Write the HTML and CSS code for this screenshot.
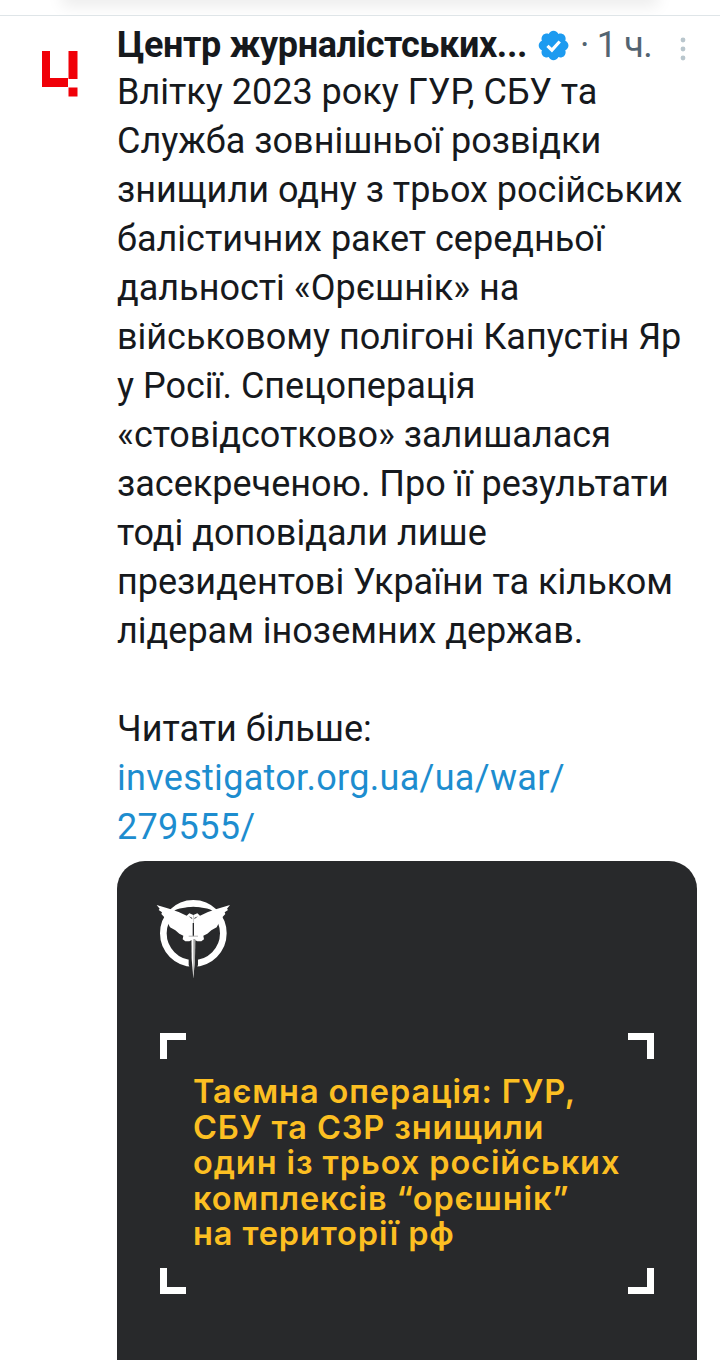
FILE: index.html
```html
<!DOCTYPE html>
<html lang="uk">
<head>
<meta charset="utf-8">
<title>Tweet</title>
<link rel="stylesheet" href="styles.css">
</head>
<body>
<div class="topbar"></div>
<article class="tweet">
  <div class="avatar">
    <svg class="avatar-logo" viewBox="0 0 36 46" width="36" height="46"><path fill="#f00008" d="M0 0h8v27h18v9H0zM26.500 0h9v28h-9zM26.500 36.500h9v9h-9z"/></svg>
  </div>
  <div class="main">
    <header class="head">
      <span class="name">Центр журналістських...</span>
      <svg class="badge" viewBox="0 0 22 22" width="35" height="35"><path fill="#1d9bf0" d="M20.400 11c0-1.300-.8-2.500-2-3 .5-1.200.2-2.600-.7-3.600-1-.9-2.400-1.200-3.600-.7-.5-1.200-1.700-2-3.100-2s-2.500.8-3 2c-1.200-.5-2.600-.2-3.600.7-.9 1-1.200 2.400-.7 3.600-1.200.5-2 1.700-2 3s.8 2.500 2 3c-.5 1.200-.2 2.600.7 3.600 1 .9 2.400 1.200 3.600.7.5 1.200 1.700 2 3 2s2.600-.8 3.100-2c1.200.5 2.600.2 3.600-.7.900-1 1.200-2.400.7-3.600 1.200-.5 2-1.700 2-3z"/><path fill="none" stroke="#fff" stroke-width="2" d="M7.200 11.200l2.800 2.700 4.900-5.400"/></svg>
      <span class="time">· 1 ч.</span>
      <svg class="more" viewBox="0 0 8 26" width="8" height="26"><circle cx="4" cy="4" r="2.400"/><circle cx="4" cy="13" r="2.400"/><circle cx="4" cy="22" r="2.400"/></svg>
    </header>
    <p class="text">Влітку 2023 року ГУР, СБУ та<br>Служба зовнішньої розвідки<br>знищили одну з трьох російських<br>балістичних ракет середньої<br>дальності «Орєшнік» на<br>військовому полігоні Капустін Яр<br>у Росії. Спецоперація<br>«стовідсотково» залишалася<br>засекреченою. Про її результати<br>тоді доповідали лише<br>президентові України та кільком<br>лідерам іноземних держав.<br><br>Читати більше:<br><a class="link" href="#">investigator.org.ua/ua/war/<br>279555/</a></p>
    <section class="card">
      <svg class="emblem" viewBox="0 0 270 270" width="90" height="90">
        <circle cx="130" cy="115" r="90" fill="none" stroke="#fff" stroke-width="20"/>
        <ellipse cx="130" cy="50" rx="58" ry="13" fill="#28292b"/>
        <path fill="#28292b" d="M116 135h28v75l-8 20h-12l-8-20z"/>
        <path fill="#fff" d="M130 60l-12-5-8 7-24-11-26-9-40-12 9 11-3 4 10 7-2 5 9 10-1 7 13 13 5 10 16 9 12 10 12 6-2 11 8 6h12l12-6z"/>
        <path fill="#fff" d="M130 60l12-5 8 7 24-11 26-9 40-12-9 11 3 4-10 7 2 5-9 10 1 7-13 13-5 10-16 9-12 10-12 6 2 11-8 6h-12l-12-6z"/>
        <path fill="#28292b" d="M116 64l10 4 1 5zM144 64l-10 4-1 5z"/>
        <path fill="#fff" d="M124 92h12l-1 100-5 58-5-58z"/>
        <path fill="#a8a8a8" d="M130 132h6l-1 60-5 58z"/>
        <path fill="#28292b" d="M128 84h4v40h-4z"/>
        <path fill="#b4b4b4" d="M116 122h28v3h-28z"/>
      </svg>
      <div class="frame">
        <div class="corners"><span class="corner tl"></span><span class="corner tr"></span></div>
        <h2 class="headline">Таємна операція: ГУР,<br>СБУ та СЗР знищили<br>один із трьох російських<br>комплексів “орєшнік”<br>на території рф</h2>
        <div class="corners"><span class="corner bl"></span><span class="corner br"></span></div>
      </div>
    </section>
  </div>
</article>
</body>
</html>
```
FILE: styles.css
```css
* { box-sizing: border-box; }
html, body { margin: 0; padding: 0; background: #fff; }
body { width: 720px; height: 1372px; overflow: hidden; font-family: Roboto, "Liberation Sans", sans-serif; color: #16191d; }
.topbar { height: 16px; border-bottom: 1px solid #dfe5e8; overflow: hidden; }
.topbar::before { content: ""; display: block; height: 4px; margin: -6px 70px 0; box-shadow: 0 0 16px 8px rgba(0,0,0,.08); }
.tweet { display: flex; }
.avatar { width: 117px; flex: none; padding: 35px 0 0 42px; }
.avatar-logo { display: block; }
.main { width: 580px; flex: none; }
.head { display: flex; align-items: center; height: 56px; padding-top: 2px; }
.name { font-size: 36px; font-weight: 700; letter-spacing: -.37px; white-space: nowrap; }
.badge { margin-left: 9px; flex: none; }
.time { margin-left: 9px; font-size: 36px; letter-spacing: -.8px; color: #536471; white-space: nowrap; }
.more { margin: 7px 0 0 27px; fill: #b9c6cd; flex: none; }
.text { margin: -4px 0 0; font-size: 36px; line-height: 49px; white-space: nowrap; }
.link { color: #1d8dcf; text-decoration: none; letter-spacing: .3px; }
.card { margin-top: 9px; height: 499px; background: #28292b; border-radius: 28px 28px 0 0; padding: 34px 43px 0 33px; }
.emblem { display: block; }
.frame { margin: 48px 0 0 10px; }
.corners { display: flex; justify-content: space-between; }
.corner { width: 26px; height: 26px; border: 0 solid #fff; }
.tl { border-width: 7px 0 0 7px; }
.tr { border-width: 7px 7px 0 0; }
.bl { border-width: 0 0 7px 7px; }
.br { border-width: 0 7px 7px 0; }
.headline { margin: 15px 0 16px 33px; font: 600 32.500px/35.500px Inter, sans-serif; letter-spacing: .9px; color: #fcbf22; white-space: nowrap; }
```
